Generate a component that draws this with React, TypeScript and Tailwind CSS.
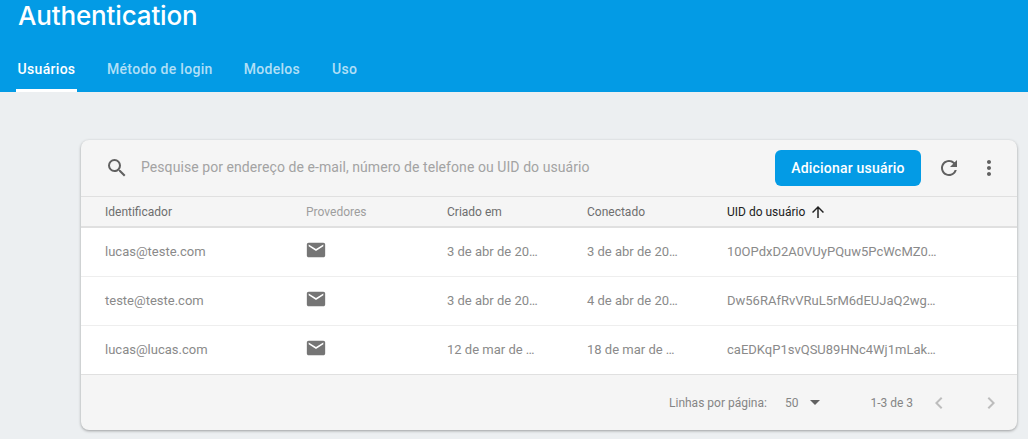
import { MdArrowUpward, MdChevronLeft, MdChevronRight, MdMail, MdMoreVert, MdRefresh, MdSearch } from 'react-icons/md'

const COLS = 'grid grid-cols-[225px_141px_140px_140px_1fr] items-center'

const users = [
  { email: 'lucas@teste.com', created: '3 de abr de 20…', login: '3 de abr de 20…', uid: '10OPdxD2A0VUyPQuw5PcWcMZ0…' },
  { email: 'teste@teste.com', created: '3 de abr de 20…', login: '4 de abr de 20…', uid: 'Dw56RAfRvVRuL5rM6dEUJaQ2wg…' },
  { email: 'lucas@lucas.com', created: '12 de mar de …', login: '18 de mar de …', uid: 'caEDKqP1svQSU89HNc4Wj1mLak…' },
]

export default function App() {
  return (
    <div className="h-[439px] w-[1028px] overflow-hidden bg-[#eceff1] font-['Roboto',sans-serif]">
      <header className="h-[92px] bg-[#039be5]">
        <h1 className="pl-[18px] font-['Inter',sans-serif] text-[26px] font-medium leading-[32px] tracking-[-0.15px] text-white">
          Authentication
        </h1>
        <nav className="mt-[17px] flex h-[43px] pl-4 text-[14px] font-medium leading-[40px] tracking-[0.3px] text-white/70">
          <div className="h-[43px] w-[61px] rounded-t-[3px] border-b-[3px] border-white text-center text-white">Usuários</div>
          <div className="ml-[30px]">Método de login</div>
          <div className="ml-[31px]">Modelos</div>
          <div className="ml-[32px]">Uso</div>
        </nav>
      </header>

      <main className="ml-[81px] mt-12 h-[290px] w-[936px] overflow-hidden rounded-lg bg-[#f5f5f5] shadow-[0_1px_3px_rgba(0,0,0,0.35)]">
        <div className="flex h-[57px] items-center border-b border-[#e0e0e0] pl-6 pr-4">
          <MdSearch size={24} className="text-[#616161]" />
          <span className="-mt-px ml-3 text-[14px] tracking-[0.07px] text-[#a3a3a3]">
            Pesquise por endereço de e-mail, número de telefone ou UID do usuário
          </span>
          <button className="ml-auto h-[36px] w-[146px] rounded-md bg-[#039be5] text-[14px] font-medium tracking-[0.2px] text-white">
            Adicionar usuário
          </button>
          <MdRefresh size={24} className="ml-4 text-[#616161]" />
          <MdMoreVert size={24} className="ml-4 text-[#616161]" />
        </div>

        <div className={`${COLS} h-[31px] border-b-2 border-[#e0e0e0] text-[12px] text-[#6e6e6e]`}>
          <div className="pl-6">Identificador</div>
          <div className="text-[#9e9e9e]">Provedores</div>
          <div>Criado em</div>
          <div>Conectado</div>
          <div className="flex items-center text-[#212121]">
            UID do usuário
            <MdArrowUpward size={18} className="ml-[4px]" />
          </div>
        </div>

        <div className="bg-white text-[13px] text-[#8a8a8a]">
          {users.map((u) => (
            <div key={u.email} className={`${COLS} h-[49px] border-b border-[#eeeeee] last:border-[#e0e0e0]`}>
              <div className="pl-6">{u.email}</div>
              <div className="-mt-1 -ml-[1px]"><MdMail size={22} className="text-[#757575]" /></div>
              <div>{u.created}</div>
              <div>{u.login}</div>
              <div>{u.uid}</div>
            </div>
          ))}
        </div>

        <div className="flex h-[55px] items-center text-[12px] text-[#858585]">
          <span className="ml-[588px]">Linhas por página:</span>
          <span className="ml-[18px]">50</span>
          <span className="ml-[12px] h-0 w-0 border-x-[5px] border-t-[5px] border-x-transparent border-t-[#616161]" />
          <span className="ml-[50px]">1-3 de 3</span>
          <MdChevronLeft size={24} className="ml-[14px] text-[#bdbdbd]" />
          <MdChevronRight size={24} className="ml-[28px] text-[#bdbdbd]" />
        </div>
      </main>
    </div>
  )
}
